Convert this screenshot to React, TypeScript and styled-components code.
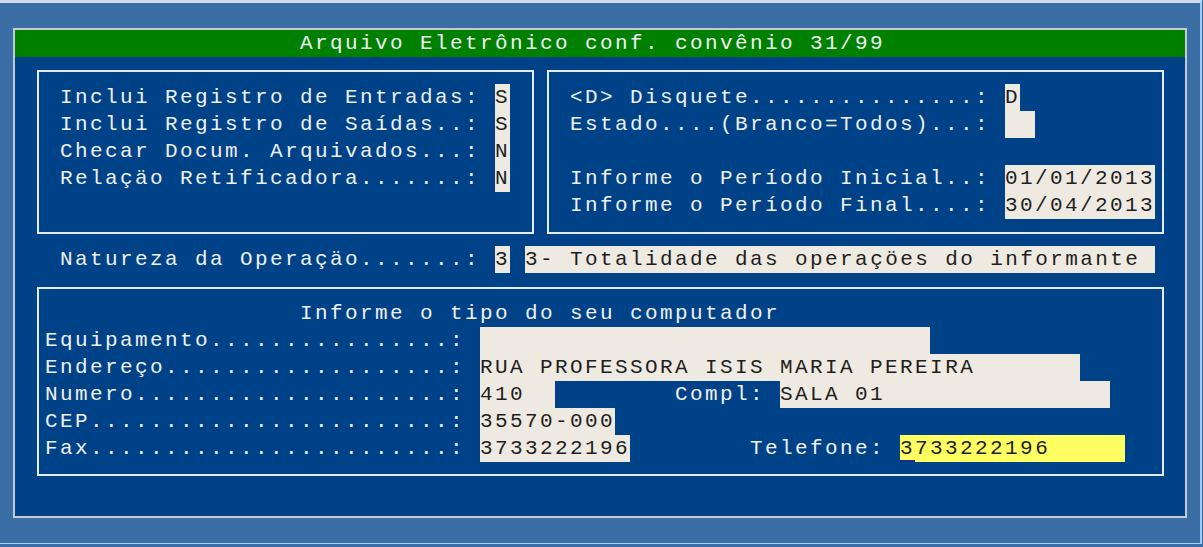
import React from "react";
import styled, { createGlobalStyle } from "styled-components";

// text-mode screen: every cell is 15px wide and 27px tall
const CELL = 15;

const GlobalStyle = createGlobalStyle`
  html, body {
    margin: 0;
    padding: 0;
  }
  body {
    width: 1203px;
    height: 547px;
    overflow: hidden;
    background: #3a6ea5;
    font-family: "Liberation Mono", "Courier New", monospace;
  }
`;

const Desktop = styled.div`
  box-sizing: border-box;
  width: 1202px;
  height: 544px;
  border-top: 3px solid #d3dce6;
  border-right: 2px solid #9fc9ee;
  border-bottom: 1px solid #a8d0f0;
  padding: 25px 0 0 13px;
  background: #3a6ea5;
`;

const Window = styled.div`
  width: 1170px;
  height: 486px;
  border: 2px solid #c5cad0;
  background: #004288;
  color: #eef0f2;
  font-size: 21px;
  letter-spacing: 2.4px;
  line-height: 27px;
  display: flex;
  flex-direction: column;
`;

const TitleBar = styled.div`
  height: 27px;
  background: #008000;
  padding-left: 285px;
  white-space: pre;
`;

const BoxRow = styled.div`
  display: flex;
  gap: 13px;
  margin: 13px 0 0 22px;
`;

const Box = styled.div<{ $width: number; $height: number; $padLeft: number; $padTop: number }>`
  box-sizing: border-box;
  width: ${(p) => p.$width}px;
  height: ${(p) => p.$height}px;
  border: 2px solid #e4ecf3;
  padding: ${(p) => p.$padTop}px 0 0 ${(p) => p.$padLeft}px;
  display: flex;
  flex-direction: column;
`;

const Line = styled.div<{ $indent?: number }>`
  height: 27px;
  white-space: pre;
  padding-left: ${(p) => (p.$indent || 0) * CELL}px;
`;

const NatureLine = styled(Line)`
  margin: 12px 0 0 45px;
`;

const BottomBox = styled(Box)`
  margin: 14px 0 0 22px;
`;

const Field = styled.span<{ $cells: number; $yellow?: boolean }>`
  display: inline-block;
  vertical-align: top;
  height: 27px;
  width: ${(p) => p.$cells * CELL}px;
  background: ${(p) => (p.$yellow ? "#ffff62" : "#eeeae1")};
  color: #1e1e1e;
  white-space: pre;
  overflow: hidden;
`;

const Cursor = styled.span`
  display: inline-block;
  vertical-align: top;
  height: 27px;
  box-shadow: inset 0 -2px 0 #14308c;
`;

const Gap = styled.span<{ $cells: number }>`
  display: inline-block;
  vertical-align: top;
  width: ${(p) => p.$cells * CELL}px;
`;

export default function App() {
  return (
    <>
      <GlobalStyle />
      <Desktop>
        <Window>
          <TitleBar>Arquivo Eletrônico conf. convênio 31/99</TitleBar>

          <BoxRow>
            <Box $width={497} $height={164} $padLeft={21} $padTop={12}>
              <Line>Inclui Registro de Entradas: <Field $cells={1}>S</Field></Line>
              <Line>Inclui Registro de Saídas..: <Field $cells={1}>S</Field></Line>
              <Line>Checar Docum. Arquivados...: <Field $cells={1}>N</Field></Line>
              <Line>Relaçäo Retificadora.......: <Field $cells={1}>N</Field></Line>
            </Box>
            <Box $width={617} $height={164} $padLeft={21} $padTop={12}>
              <Line>{"<D> Disquete...............: "}<Field $cells={1}>D</Field></Line>
              <Line>Estado....(Branco=Todos)...: <Field $cells={2}> </Field></Line>
              <Line> </Line>
              <Line>Informe o Período Inicial..: <Field $cells={10}>01/01/2013</Field></Line>
              <Line>Informe o Período Final....: <Field $cells={10}>30/04/2013</Field></Line>
            </Box>
          </BoxRow>

          <NatureLine>
            Natureza da Operaçäo.......: <Field $cells={1}>3</Field> <Field $cells={42}>3- Totalidade das operaçöes do informante</Field>
          </NatureLine>

          <BottomBox $width={1127} $height={189} $padLeft={6} $padTop={11}>
            <Line $indent={17}>Informe o tipo do seu computador</Line>
            <Line>Equipamento................: <Field $cells={30}> </Field></Line>
            <Line>Endereço...................: <Field $cells={40}>RUA PROFESSORA ISIS MARIA PEREIRA</Field></Line>
            <Line>
              Numero.....................: <Field $cells={5}>410</Field><Gap $cells={8} />Compl: <Field $cells={22}>SALA 01</Field>
            </Line>
            <Line>CEP........................: <Field $cells={9}>35570-000</Field></Line>
            <Line>
              Fax........................: <Field $cells={10}>3733222196</Field><Gap $cells={8} />Telefone: <Field $cells={15} $yellow><Cursor>3</Cursor>733222196</Field>
            </Line>
          </BottomBox>
        </Window>
      </Desktop>
    </>
  );
}
